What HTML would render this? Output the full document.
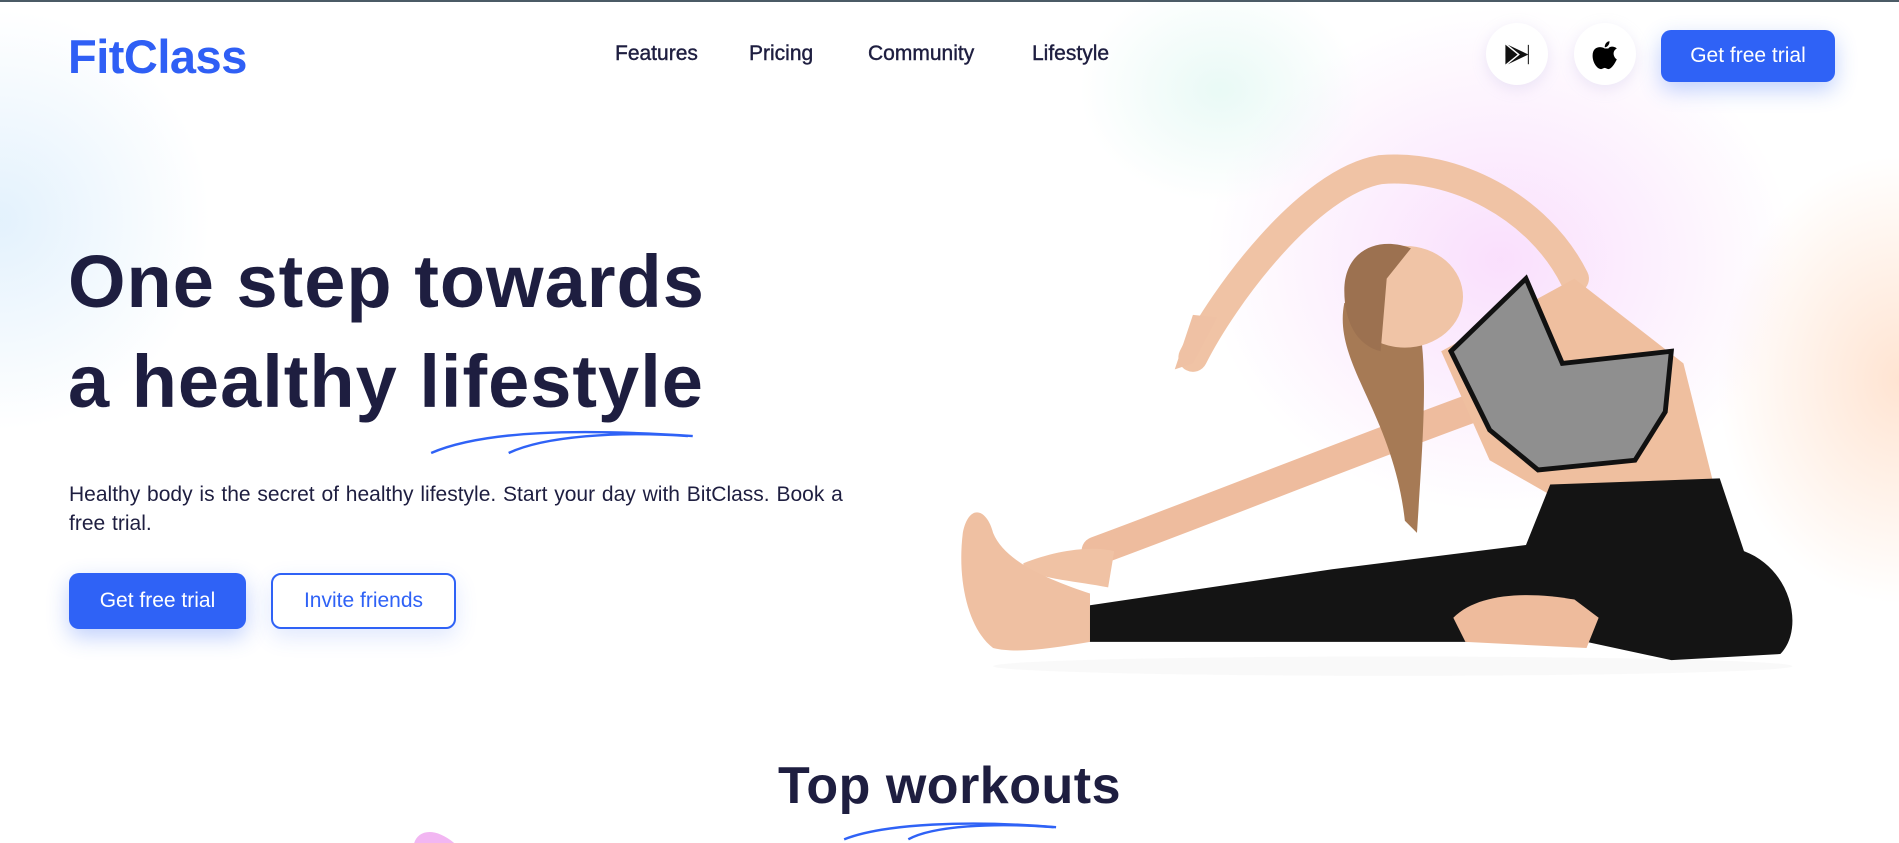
<!DOCTYPE html>
<html><head><meta charset="utf-8"><style>
*{margin:0;padding:0;box-sizing:border-box}
html,body{width:1899px;height:843px;overflow:hidden;background:#fff;font-family:"Liberation Sans",sans-serif;color:#1e1e40}
.bg{position:absolute;inset:0;
background:
radial-gradient(ellipse 200px 160px at 1220px 90px, rgba(215,245,238,.55), transparent 70%),
radial-gradient(ellipse 420px 360px at 1500px 260px, rgba(248,215,252,.8), transparent 70%),
radial-gradient(ellipse 260px 320px at 1900px 380px, rgba(255,225,205,.9), transparent 70%),
radial-gradient(ellipse 300px 300px at 0px 220px, rgba(220,238,252,.8), transparent 70%),
#fff;}
.topline{position:absolute;left:0;top:0;width:1899px;height:2px;background:#4b5b66}
.logo{position:absolute;left:68px;top:29px;font-size:47px;font-weight:bold;color:#2f5ff5;letter-spacing:-0.5px}
.nav a{position:absolute;top:42px;font-size:21px;color:#1e1e40;text-decoration:none;-webkit-text-stroke:.4px #1e1e40}
.circ{position:absolute;top:23px;width:62px;height:62px;border-radius:50%;background:#fff;box-shadow:0 4px 14px rgba(180,170,220,.25)}
.btn{position:absolute;background:#2f62f6;color:#fff;border-radius:10px;display:flex;align-items:center;justify-content:center;font-size:21px;box-shadow:0 8px 22px rgba(47,98,246,.3)}
.btn2{position:absolute;border:2px solid #2f62f6;color:#2f62f6;border-radius:10px;display:flex;align-items:center;justify-content:center;font-size:21px;background:#fff;box-shadow:0 8px 22px rgba(47,98,246,.15)}
h1{position:absolute;left:68px;top:232px;font-size:74px;line-height:100px;font-weight:bold;color:#1e1e40;letter-spacing:1px}
p.sub{position:absolute;left:69px;top:480px;width:780px;font-size:21px;line-height:29px;color:#1e1e40;word-spacing:1px}
h2{position:absolute;left:0;width:1899px;text-align:center;top:756px;font-size:52px;font-weight:bold;color:#1e1e40;letter-spacing:0.5px}
svg.art{position:absolute;left:0;top:0}
</style></head><body>
<div class="bg"></div>
<div class="topline"></div>
<div class="logo">FitClass</div>
<div class="nav"><a style="left:615px">Features</a><a style="left:749px">Pricing</a><a style="left:868px">Community</a><a style="left:1032px">Lifestyle</a></div>
<div class="circ" style="left:1486px"></div>
<div class="circ" style="left:1574px"></div>
<div class="btn" style="left:1661px;top:30px;width:174px;height:52px">Get free trial</div>
<h1>One step towards<br>a healthy lifestyle</h1>
<p class="sub">Healthy body is the secret of healthy lifestyle. Start your day with BitClass. Book a free trial.</p>
<div class="btn" style="left:69px;top:573px;width:177px;height:56px">Get free trial</div>
<div class="btn2" style="left:271px;top:573px;width:185px;height:56px">Invite friends</div>
<h2>Top workouts</h2>
<svg class="art" width="1899" height="843" viewBox="0 0 1568 696">
<path d="M1243 36 L1262 45 L1243 54 Z" fill="#111"/>
<path d="M1243 36 L1254 45 L1243 54" fill="none" stroke="#fff" stroke-width="1.2"/>
<line x1="1262" y1="37" x2="1262" y2="53" stroke="#333" stroke-width="1"/>
<path d="M1325 40 c-3 -2 -10 -2 -10 6 c0 6 4 11 7 11 c1 0 2 -1 3 -1 c1 0 2 1 3 1 c3 0 6 -6 7 -8 c-3 -2 -4 -7 0 -9 c-2 -2 -6 -2 -7 0 z M1325 39 c0 -3 2 -5 4 -5 c0 3 -2 5 -4 5z" fill="#000"/>
<path d="M356 374 C400 355 480 354 572 360" stroke="#2f62f6" stroke-width="2" fill="none"/>
<path d="M420 374 C450 360 510 356 568 360" stroke="#2f62f6" stroke-width="2" fill="none"/>
<path d="M697 693 C730 680 800 677 872 683" stroke="#2f62f6" stroke-width="2" fill="none"/>
<path d="M750 693 C770 682 820 679 870 683" stroke="#2f62f6" stroke-width="2" fill="none"/>
<path d="M342 696 C345 686 358 682 375 696 Z" fill="#f2b6f2"/>
<ellipse cx="1150" cy="550" rx="330" ry="8" fill="rgba(0,0,0,0.025)"/>
<path d="M985 295 C1010 245 1080 150 1140 140 C1200 135 1270 170 1300 230" stroke="#f0c3a5" stroke-width="24" fill="none" stroke-linecap="round"/>
<path d="M970 305 L985 260 L1005 262 L985 300 Z" fill="#efc1a4"/>
<path d="M1235 330 C1150 360 1000 420 905 455" stroke="#eebc9e" stroke-width="24" fill="none" stroke-linecap="round"/>
<path d="M845 465 C870 455 900 450 920 455 L915 485 C890 480 860 478 845 470Z" fill="#f0c2a4"/>
<path d="M1110 250 C1100 300 1150 340 1160 430 L1170 440 C1175 360 1180 300 1170 260Z" fill="#a67a55"/>
<ellipse cx="1160" cy="245" rx="48" ry="42" fill="#f0c4a6"/>
<path d="M1110 240 C1110 205 1140 195 1165 205 L1145 230 L1140 290 C1120 285 1110 265 1110 240Z" fill="#9c7150"/>
<path d="M1190 290 L1300 230 L1390 300 L1420 420 L1300 420 L1230 380Z" fill="#efbf9f"/>
<path d="M1198 290 L1260 230 L1290 300 L1380 290 L1375 340 L1350 380 L1270 388 L1230 355Z" fill="#8f8f8f" stroke="#111" stroke-width="4"/>
<path d="M1280 400 L1420 395 L1440 455 C1480 470 1490 520 1470 540 L1380 545 L1310 530 L1210 530 L1000 530 L898 530 L898 500 L1100 470 L1260 450Z" fill="#141414"/>
<path d="M795 440 C800 415 815 420 820 440 C830 465 870 480 900 490 L900 530 C870 535 840 540 820 535 C800 520 790 480 795 440Z" fill="#efc0a2"/>
<path d="M1200 510 C1220 490 1260 488 1300 495 L1320 510 L1310 535 L1210 530Z" fill="#eebb9c"/>
</svg>
</body></html>
